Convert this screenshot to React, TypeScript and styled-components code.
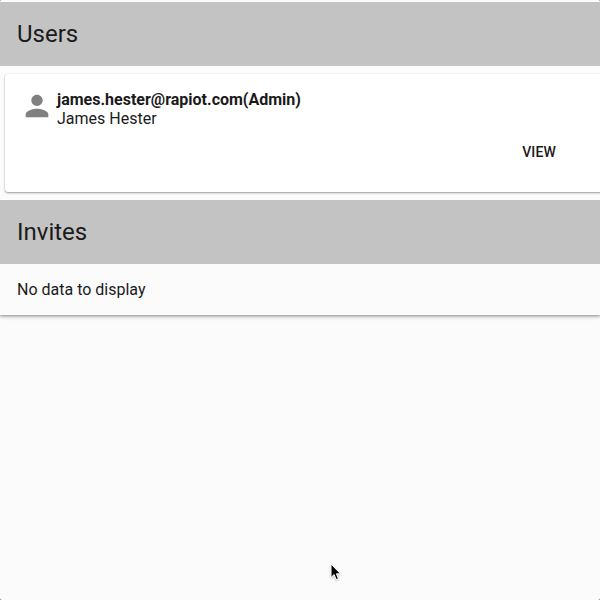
import React from "react";
import styled, { createGlobalStyle } from "styled-components";

const GlobalStyle = createGlobalStyle`
  * { box-sizing: border-box; }
  html { background: #777; overflow: hidden; }
  body { margin: 0; font-family: Roboto, "Noto Sans", sans-serif; color: #1a1a1a; }
`;

const Window = styled.main`
  position: relative;
  width: 600px;
  height: 600px;
  overflow: hidden;
  background: #fbfbfb;
  border-radius: 2px;
`;

const Panel = styled.div`
  height: 315px;
  padding-top: 2px;
  background: #fbfbfb;
  box-shadow: 0 1px 5px rgba(0, 0, 0, 0.22), 0 2px 2px rgba(0, 0, 0, 0.14), 0 1px 1px rgba(0, 0, 0, 0.08);
`;

const SectionBar = styled.header`
  display: flex;
  align-items: center;
  height: 64px;
  padding-left: 17px;
  background: #c3c3c3;
`;

const SectionTitle = styled.h2`
  margin: 0;
  font-size: 24px;
  font-weight: 400;
  line-height: 32px;
`;

const UserCard = styled.article`
  display: flex;
  flex-direction: column;
  width: 610px;
  height: 118px;
  margin: 8px 0 8px 5px;
  padding: 16px 0 0 15px;
  background: #fff;
  border-radius: 3px;
  box-shadow: 0 1px 2px rgba(0, 0, 0, 0.38), 0 0 1px rgba(0, 0, 0, 0.12);
`;

const Identity = styled.div`
  display: grid;
  grid-template-columns: 37px 1fr;
`;

const Avatar = styled.svg`
  width: 34px;
  height: 34px;
  margin-top: -1px;
  fill: #808080;
`;

const Email = styled.div`
  font-size: 16px;
  font-weight: 700;
  line-height: 19px;
`;

const Name = styled.div`
  font-size: 16px;
  line-height: 19px;
`;

const Actions = styled.div`
  display: flex;
  justify-content: flex-end;
  padding: 6px 51px 0 0;
`;

const ViewButton = styled.button`
  height: 36px;
  padding: 0 8px;
  border: 0;
  background: none;
  color: #1a1a1a;
  font: 500 14px/36px Roboto, sans-serif;
  letter-spacing: 0.15px;
`;

const EmptyMessage = styled.p`
  margin: 0;
  padding-left: 17px;
  font-size: 16px;
  line-height: 51px;
`;

const Pointer = styled.svg`
  position: absolute;
  left: 329px;
  top: 561px;
  width: 14px;
  height: 22px;
  filter: drop-shadow(0 1px 1px rgba(0, 0, 0, 0.25));
`;

export default function App() {
  return (
    <Window>
      <GlobalStyle />
      <Panel>
        <SectionBar><SectionTitle>Users</SectionTitle></SectionBar>
        <UserCard>
          <Identity>
            <Avatar viewBox="0 0 24 24" aria-hidden="true">
              <path d="M12 12c2.21 0 4-1.79 4-4s-1.79-4-4-4-4 1.79-4 4 1.79 4 4 4zm0 2c-2.67 0-8 1.34-8 4v2h16v-2c0-2.66-5.33-4-8-4z" />
            </Avatar>
            <div>
              <Email>james.hester@rapiot.com(Admin)</Email>
              <Name>James Hester</Name>
            </div>
          </Identity>
          <Actions><ViewButton>VIEW</ViewButton></Actions>
        </UserCard>
        <SectionBar><SectionTitle>Invites</SectionTitle></SectionBar>
        <EmptyMessage>No data to display</EmptyMessage>
      </Panel>
      <Pointer viewBox="0 0 14 22" aria-hidden="true">
        <path d="M2 3v13.5l3.1-2.9 2.1 5 2.3-1-2.1-4.8h4.1z" fill="#000" stroke="#fff" strokeWidth="1" />
      </Pointer>
    </Window>
  );
}
